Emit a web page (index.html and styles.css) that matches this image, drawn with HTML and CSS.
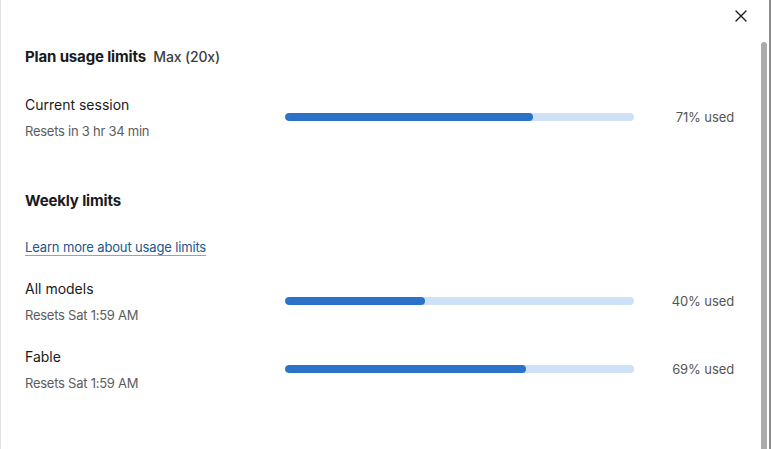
FILE: index.html
```html
<!DOCTYPE html>
<html lang="en">
<head>
<meta charset="utf-8">
<title>Plan usage limits</title>
<link rel="stylesheet" href="styles.css">
</head>
<body>
<div class="window">
  <section class="panel">
    <header class="panel-head">
      <button class="close" aria-label="Close">
        <svg width="12" height="12" viewBox="0 0 12 12" fill="none" stroke="#1a1a1a" stroke-width="1.4" stroke-linecap="round"><path d="M1 1L11 11M11 1L1 11"/></svg>
      </button>
    </header>

    <h2 class="heading">Plan usage limits <span class="plan">Max (20x)</span></h2>

    <div class="limits">
      <div class="limit">
        <div class="limit-text">
          <div class="limit-name">Current session</div>
          <div class="limit-reset">Resets in 3 hr 34 min</div>
        </div>
        <div class="bar"><div class="bar-fill" style="width:71%"></div></div>
        <div class="limit-pct">71% used</div>
      </div>
    </div>

    <h2 class="heading heading-weekly">Weekly limits</h2>
    <a class="learn" href="#">Learn more about usage limits</a>

    <div class="limits limits-weekly">
      <div class="limit">
        <div class="limit-text">
          <div class="limit-name">All models</div>
          <div class="limit-reset">Resets Sat 1:59 AM</div>
        </div>
        <div class="bar"><div class="bar-fill" style="width:40%"></div></div>
        <div class="limit-pct">40% used</div>
      </div>
      <div class="limit">
        <div class="limit-text">
          <div class="limit-name">Fable</div>
          <div class="limit-reset">Resets Sat 1:59 AM</div>
        </div>
        <div class="bar"><div class="bar-fill" style="width:69%"></div></div>
        <div class="limit-pct">69% used</div>
      </div>
    </div>
  </section>
  <div class="scrollbar"><div class="thumb"></div></div>
</div>
</body>
</html>
```
FILE: styles.css
```css
* { box-sizing: border-box; }

html, body {
  margin: 0;
  padding: 0;
  height: 100%;
  background: #ffffff;
}

body {
  font-family: Inter, "Noto Sans", "Liberation Sans", sans-serif;
  color: #1a1a1a;
  overflow: hidden;
}

.window {
  display: flex;
  height: 449px;
  border-left: 1px solid #e2e2e2;
}

.panel {
  flex: 1;
  padding: 0 27px 0 24px;
  display: flex;
  flex-direction: column;
}

.panel-head {
  height: 30px;
  display: flex;
  justify-content: flex-end;
  align-items: center;
  margin-right: -20px;
}

.close {
  width: 26px;
  height: 26px;
  border: 0;
  background: transparent;
  padding: 0;
  display: flex;
  align-items: center;
  justify-content: center;
  cursor: pointer;
  margin-top: 2px;
}

.heading {
  margin: 17px 0 0;
  font-size: 15px;
  line-height: 20px;
  font-weight: 650;
  letter-spacing: -0.15px;
}

.plan {
  font-weight: 500;
  font-size: 14px;
  color: #3d3d3d;
  margin-left: 4px;
}

.heading-weekly {
  margin-top: 50px;
}

.limits {
  display: flex;
  flex-direction: column;
  gap: 22px;
  margin-top: 28px;
}

.limits-weekly {
  margin-top: 22px;
}

.limit {
  display: grid;
  grid-template-columns: 260px 349px 1fr;
  align-items: center;
}

.limit-text {
  display: flex;
  flex-direction: column;
  gap: 6px;
}

.limit-name {
  font-size: 14px;
  line-height: 20px;
  color: #1a1a1a;
}

.limit-reset {
  font-size: 13px;
  line-height: 20px;
  color: #5c5c5c;
  letter-spacing: -0.25px;
}

.bar {
  height: 8px;
  border-radius: 4px;
  background: #cfe1f6;
  overflow: hidden;
  margin-top: -2px;
}

.bar-fill {
  height: 100%;
  border-radius: 4px;
  background: #2c72c9;
}

.limit-pct {
  text-align: right;
  font-size: 13px;
  color: #555555;
  margin-top: -2px;
  letter-spacing: -0.1px;
}

.learn {
  margin-top: 26px;
  align-self: flex-start;
  font-size: 13px;
  line-height: 20px;
  letter-spacing: -0.15px;
  color: #22578c;
  text-decoration: underline;
  text-decoration-color: #8aa6c4;
  text-underline-offset: 3px;
}

.scrollbar {
  width: 10px;
  flex: none;
  position: relative;
  border-right: 2px solid #8e8e8e;
}

.thumb {
  margin: 42px 0 0 0;
  width: 6px;
  height: 420px;
  border-radius: 3px 3px 0 0;
  background: #ababab;
}
```
